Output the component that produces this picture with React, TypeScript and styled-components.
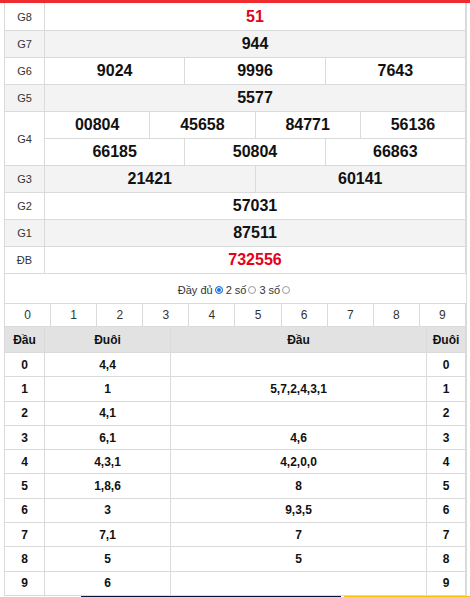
import React from "react";
import styled, { createGlobalStyle } from "styled-components";

const GlobalStyle = createGlobalStyle`
  html, body { margin: 0; padding: 0; background: #fff; }
  body { font-family: "Liberation Sans", Arial, sans-serif; color: #222; }
  * { box-sizing: border-box; }
`;

const BORDER = "#dadada";

const TopBar = styled.div`
  height: 3px;
  background: #ef2b2f;
`;

const Wrap = styled.div`
  margin-left: 4px;
  width: 463px;
  border-right: 1px solid ${BORDER};
`;

const Results = styled.div`
  border-left: 1px solid ${BORDER};
`;

const Row = styled.div<{ $alt?: boolean; $h?: number }>`
  display: grid;
  grid-template-columns: 40px 1fr;
  background: ${(p) => (p.$alt ? "#f3f3f3" : "#fff")};
  min-height: ${(p) => p.$h ?? 27}px;
`;

const Label = styled.div`
  display: flex;
  align-items: center;
  justify-content: center;
  font-size: 11px;
  color: #333;
  border-right: 1px solid ${BORDER};
  border-bottom: 1px solid ${BORDER};
`;

const Lines = styled.div`
  display: flex;
  flex-direction: column;
`;

const Values = styled.div<{ $cols: number; $h?: number }>`
  display: grid;
  grid-template-columns: repeat(${(p) => p.$cols}, 1fr);
  height: ${(p) => p.$h ?? 27}px;
`;

const Num = styled.div<{ $red?: boolean }>`
  display: flex;
  align-items: center;
  justify-content: center;
  font-size: 16px;
  font-weight: 700;
  color: ${(p) => (p.$red ? "#e5001c" : "#111")};
  border-right: 1px solid ${BORDER};
  border-bottom: 1px solid ${BORDER};
`;

const RadioLine = styled.div`
  height: 29px;
  display: flex;
  align-items: center;
  justify-content: center;
  font-size: 11px;
  color: #333;
  border-left: 1px solid ${BORDER};
  padding-top: 2px;
`;

const Radio = styled.span<{ $on?: boolean }>`
  display: inline-block;
  width: 8px;
  height: 8px;
  border-radius: 50%;
  margin: 0 3px 0 2px;
  border: 1px solid ${(p) => (p.$on ? "#1a73e8" : "#9a9a9a")};
  background: ${(p) => (p.$on ? "#1a73e8" : "#fff")};
  box-shadow: ${(p) => (p.$on ? "inset 0 0 0 1px #fff" : "none")};
`;

const DigitRow = styled.div`
  display: grid;
  grid-template-columns: repeat(10, 1fr);
  height: 24px;
  border-top: 1px solid ${BORDER};
  border-bottom: 1px solid ${BORDER};
  border-left: 1px solid ${BORDER};
`;

const Digit = styled.div`
  display: flex;
  align-items: center;
  justify-content: center;
  font-size: 12px;
  color: #333;
  border-right: 1px solid ${BORDER};
`;

const LotoTable = styled.div`
  border-left: 1px solid ${BORDER};
`;

const LotoRow = styled.div<{ $head?: boolean }>`
  display: grid;
  grid-template-columns: 40px 126px 1fr 39px;
  height: ${(p) => (p.$head ? "26px" : "24.3px")};
  background: ${(p) => (p.$head ? "#e2e2e2" : "#fff")};
`;

const LotoCell = styled.div`
  display: flex;
  align-items: center;
  justify-content: center;
  font-size: 12px;
  font-weight: 700;
  color: #111;
  border-right: 1px solid ${BORDER};
  border-bottom: 1px solid ${BORDER};
`;

const Banner = styled.div`
  display: flex;
  height: 40px;
  padding-left: 81px;
  gap: 3px;
`;

const BannerDark = styled.div`
  width: 260px;
  background: #0d1236;
`;

const BannerGold = styled.div`
  flex: 1;
  background: #f5c400;
`;

type Prize = { label: string; lines: string[][]; alt?: boolean; red?: boolean; h?: number };

const prizes: Prize[] = [
  { label: "G8", lines: [["51"]], red: true, h: 28 },
  { label: "G7", lines: [["944"]], alt: true },
  { label: "G6", lines: [["9024", "9996", "7643"]] },
  { label: "G5", lines: [["5577"]], alt: true },
  { label: "G4", lines: [["00804", "45658", "84771", "56136"], ["66185", "50804", "66863"]] },
  { label: "G3", lines: [["21421", "60141"]], alt: true },
  { label: "G2", lines: [["57031"]] },
  { label: "G1", lines: [["87511"]], alt: true },
  { label: "ĐB", lines: [["732556"]], red: true },
];

const loto: [string, string, string, string][] = [
  ["0", "4,4", "", "0"],
  ["1", "1", "5,7,2,4,3,1", "1"],
  ["2", "4,1", "", "2"],
  ["3", "6,1", "4,6", "3"],
  ["4", "4,3,1", "4,2,0,0", "4"],
  ["5", "1,8,6", "8", "5"],
  ["6", "3", "9,3,5", "6"],
  ["7", "7,1", "7", "7"],
  ["8", "5", "5", "8"],
  ["9", "6", "", "9"],
];

export default function App() {
  return (
    <>
      <GlobalStyle />
      <TopBar />
      <Wrap>
        <Results>
          {prizes.map((p) => (
            <Row key={p.label} $alt={p.alt} $h={p.h}>
              <Label>{p.label}</Label>
              <Lines>
                {p.lines.map((line, i) => (
                  <Values key={i} $cols={line.length} $h={p.h}>
                    {line.map((n, j) => (
                      <Num key={j} $red={p.red}>
                        {n}
                      </Num>
                    ))}
                  </Values>
                ))}
              </Lines>
            </Row>
          ))}
        </Results>
        <RadioLine>
          Đầy đủ
          <Radio $on />
          2 số
          <Radio />
          3 số
          <Radio />
        </RadioLine>
        <DigitRow>
          {Array.from({ length: 10 }, (_, i) => (
            <Digit key={i}>{i}</Digit>
          ))}
        </DigitRow>
        <LotoTable>
          <LotoRow $head>
            <LotoCell>Đầu</LotoCell>
            <LotoCell>Đuôi</LotoCell>
            <LotoCell>Đầu</LotoCell>
            <LotoCell>Đuôi</LotoCell>
          </LotoRow>
          {loto.map((r) => (
            <LotoRow key={r[0]}>
              <LotoCell>{r[0]}</LotoCell>
              <LotoCell>{r[1]}</LotoCell>
              <LotoCell>{r[2]}</LotoCell>
              <LotoCell>{r[3]}</LotoCell>
            </LotoRow>
          ))}
        </LotoTable>
      </Wrap>
      <Banner>
        <BannerDark />
        <BannerGold />
      </Banner>
    </>
  );
}
